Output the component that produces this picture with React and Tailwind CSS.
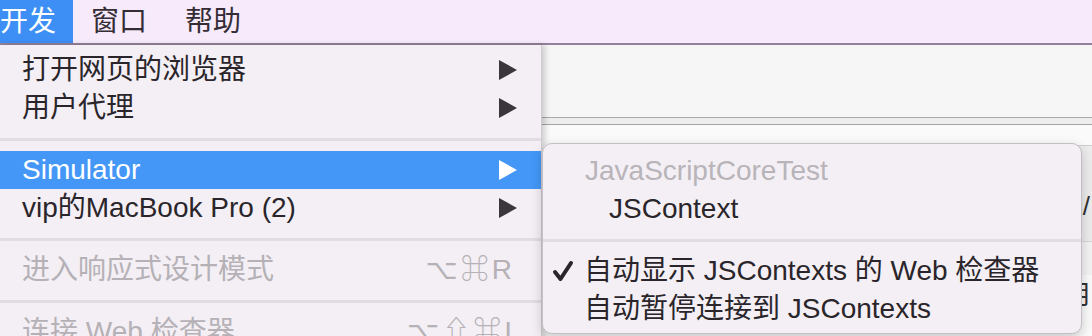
import React from "react";

const font = "font-['Liberation_Sans','Noto_Sans_CJK_SC','DejaVu_Sans',sans-serif]";

const Arrow = ({ white }) => (
    <svg width="18" height="20" viewBox="0 0 18 20" className="shrink-0">
        <polygon points="0,0 18,10 0,20" fill={white ? "#ffffff" : "#3b363b"} />
    </svg>
);

const Row = ({ label, arrow, active, disabled, shortcut }) => (
    <div
        className={`flex items-center h-[38px] pl-[22px] pr-[24px] ${
            active ? "bg-[#4497f7] text-white" : disabled ? "text-[#b5b1b6]" : "text-[#2a252a]"
        }`}
    >
        <span className="flex-1 whitespace-nowrap">{label}</span>
        {arrow && <Arrow white={active} />}
        {shortcut && <span className="pr-[2px] tracking-[3px] whitespace-nowrap">{shortcut}</span>}
    </div>
);

const Separator = () => (
    <div className="h-[24px] flex items-center">
        <div className="h-[3px] w-full bg-[#e0dce1]" />
    </div>
);

const App = () => {
    return (
        <div className={`relative w-[1092px] h-[336px] overflow-hidden bg-[#fafafa] text-[28px] ${font}`}>
            {/* menu bar */}
            <div className="flex h-[45px] bg-[#f7eafa] border-b-[2px] border-[#94809a] text-[#352d35]">
                <div className="flex items-center pr-[17px] bg-[#3d8ff5] text-white leading-none">开发</div>
                <div className="flex items-center px-[18px] leading-none">窗口</div>
                <div className="flex items-center px-[20px] leading-none">帮助</div>
            </div>

            {/* window behind the menus */}
            <div className="h-[73px] bg-[#f6f6f6] border-b border-[#a9a9a9]" />
            <div className="h-[7px] bg-[#ededed] border-b border-[#a3a3a3]" />
            <div className="flex flex-col items-end pt-[20px] text-[#333]">
                <div className="w-[60px] h-[26px] border-t border-[#cfcfcf] bg-[#ececec]" />
                <div className="w-[60px] h-[70px] bg-[#ececec] flex items-center justify-end pr-[2px] text-[26px] leading-none">
                    &lt;/
                </div>
                <div className="w-[60px] h-[34px] border-t border-[#d6d6d6] bg-[#f3f3f3]" />
                <div className="w-[60px] h-[40px] flex items-center justify-end text-[26px] leading-none">月</div>
            </div>

            {/* develop menu */}
            <div className="absolute left-0 top-[45px] w-[542px] h-[300px] pt-[6px] bg-[#f3eff4] border-r border-[#cfcad0] shadow-[3px_0_6px_rgba(0,0,0,0.18)] leading-[38px]">
                <Row label="打开网页的浏览器" arrow />
                <Row label="用户代理" arrow />
                <Separator />
                <Row label="Simulator" arrow active />
                <Row label="vip的MacBook Pro (2)" arrow />
                <Separator />
                <Row label="进入响应式设计模式" disabled shortcut="⌥⌘R" />
                <Separator />
                <Row label="连接 Web 检查器" disabled shortcut="⌥⇧⌘I" />
            </div>

            {/* simulator submenu */}
            <div className="absolute left-[542px] top-[143px] w-[540px] h-[191px] pt-[8px] rounded-[10px] bg-[#f3eff4] border border-[#c3bfc4] shadow-[0_4px_12px_rgba(0,0,0,0.2)] leading-[38px] text-[#2a252a]">
                <div className="h-[38px] pl-[42px] text-[#b8b4b9]">JavaScriptCoreTest</div>
                <div className="h-[38px] pl-[66px]">JSContext</div>
                <div className="h-[24px] flex items-center">
                    <div className="h-[3px] w-full bg-[#e0dce1]" />
                </div>
                <div className="flex items-center h-[38px] pl-[9px]">
                    <svg width="22" height="22" viewBox="0 0 22 22" className="mr-[10px] shrink-0">
                        <path d="M3 12 L8.5 19 L19 3" fill="none" stroke="#2a252a" strokeWidth="4" strokeLinecap="round" strokeLinejoin="round" />
                    </svg>
                    <span className="whitespace-nowrap">自动显示 JSContexts 的 Web 检查器</span>
                </div>
                <div className="h-[38px] pl-[41px] whitespace-nowrap">自动暂停连接到 JSContexts</div>
            </div>
        </div>
    );
};

export default App;
